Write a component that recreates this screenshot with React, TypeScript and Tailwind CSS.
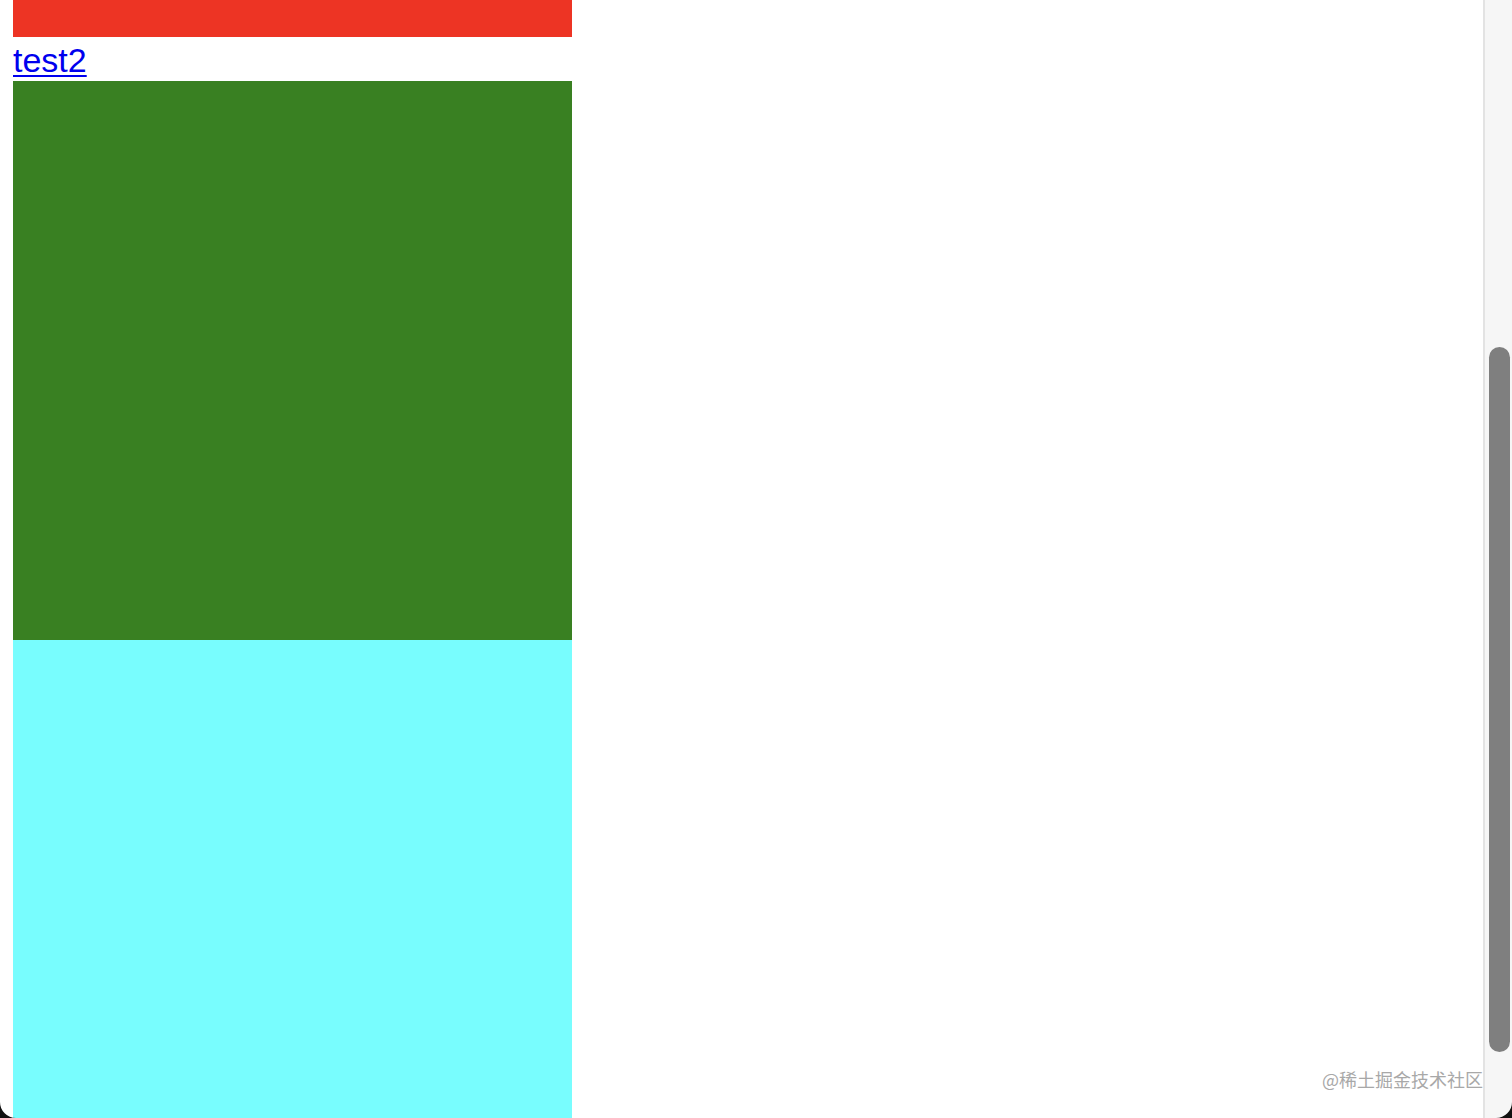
import React from "react";

export default function App() {
  return (
    <div className="relative flex h-[1118px] w-[1512px] overflow-hidden bg-white" style={{ fontFamily: '"Liberation Sans", Arial, sans-serif' }}>
      <main className="flex-1 pl-[13px]">
        <div className="flex w-[559px] flex-col">
          <div className="h-[37px] bg-[#ed3424]" />
          <div className="h-[44px] text-[34px] leading-[46px]">
            <a href="#" className="text-[#0000ee] underline decoration-[2px] underline-offset-[3px]">test2</a>
          </div>
          <div className="h-[559px] bg-[#398022]" />
          <div className="h-[478px] bg-[#78fdfe]" />
        </div>
      </main>
      <aside className="relative flex h-full w-[29px] border-l-[2px] border-[#e3e3e3] bg-[#f6f6f6] pl-[4px] pt-[347px]">
        <div className="h-[705px] w-[21px] rounded-full bg-[#7f7f7f]" />
      </aside>
      <div
        className="absolute right-[29px] top-[1066px] text-[18px] leading-[26px] text-[#a8a8a8]"
        style={{ fontFamily: '"Noto Sans CJK SC", "Noto Sans", sans-serif' }}
      >
        @稀土掘金技术社区
      </div>
      <svg className="absolute bottom-0 left-0" width="16" height="16" viewBox="0 0 16 16">
        <path d="M0 0 A16 16 0 0 0 16 16 L0 16 Z" fill="#111" />
      </svg>
      <svg className="absolute bottom-0 right-0" width="16" height="16" viewBox="0 0 16 16">
        <path d="M16 0 A16 16 0 0 1 0 16 L16 16 Z" fill="#111" />
      </svg>
    </div>
  );
}
